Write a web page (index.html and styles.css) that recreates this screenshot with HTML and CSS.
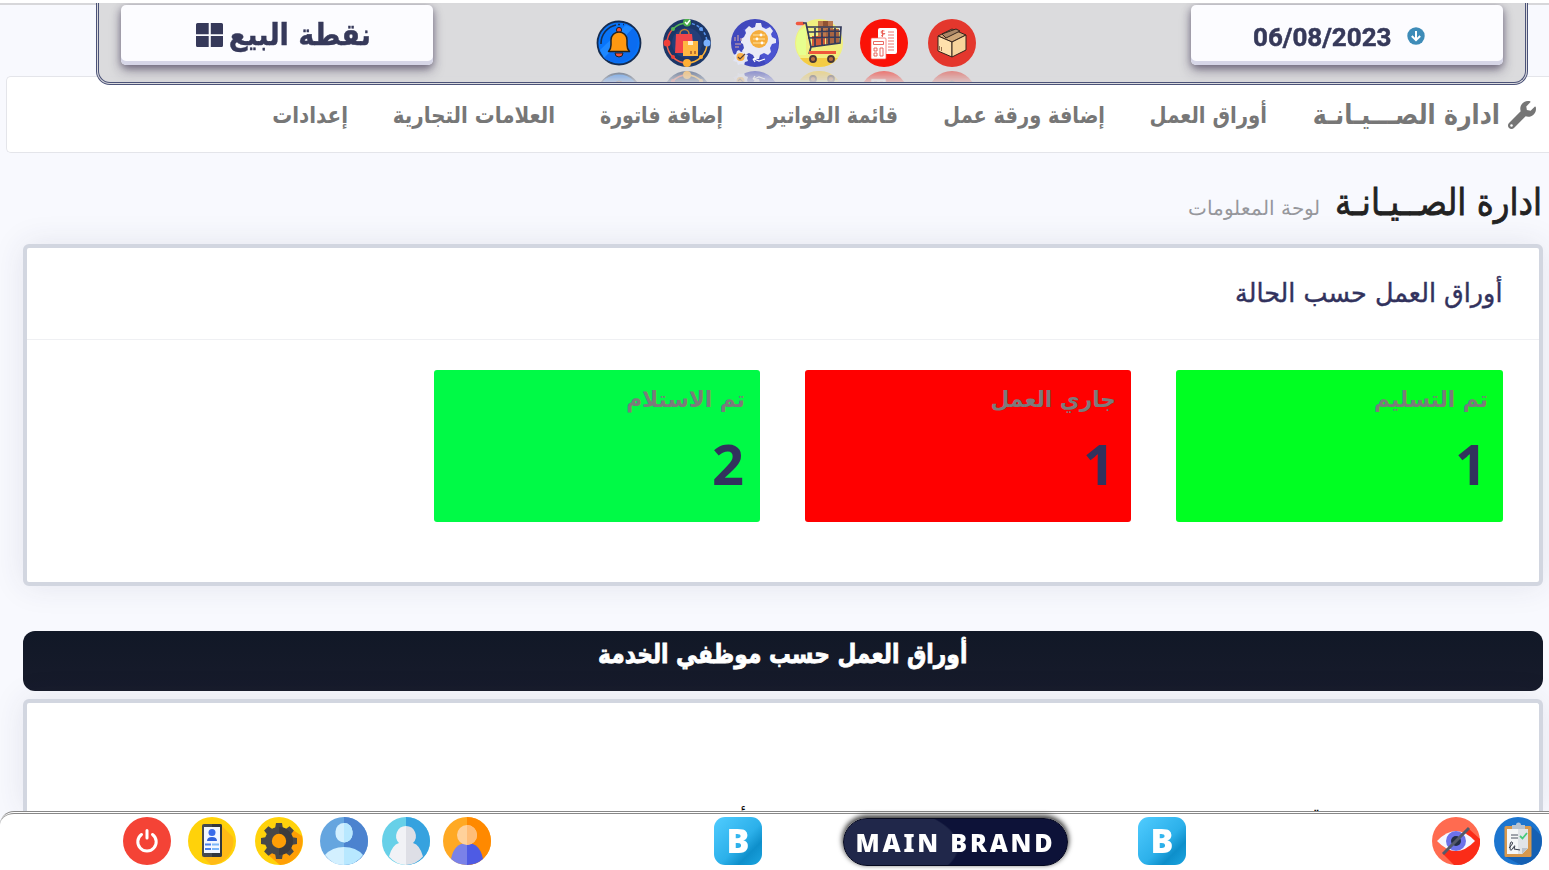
FILE: index.html
```html
<!DOCTYPE html>
<html lang="ar">
<head>
<meta charset="utf-8">
<title>ادارة الصيانة</title>
<link rel="stylesheet" href="styles.css">
</head>
<body>
<div class="topline"></div>
<header class="dock">
  <a class="key key-pos"><svg class="grid-icon" viewBox="0 0 28 24"><path d="M1.500 0H12.700V11.200H0V1.500Q0 0 1.500 0ZM14.800 0H25.500Q27 0 27 1.500V11.200H14.800ZM0 13H12.700V24H1.500Q0 24 0 22.500ZM14.800 13H27V22.500Q27 24 25.500 24H14.800Z"/></svg><span class="pos-text" dir="rtl">نقطة البيع</span></a>
  <div class="launch">
    <svg class="ico" viewBox="0 0 48 48"><circle cx="24" cy="24" r="21.500" fill="#0874f9" stroke="#152c50" stroke-width="1.800"/><path d="M9 39 38 9A21 21 0 0 1 9 39" fill="#0b6cf0"/><path d="M9 39 38 9 31 6 5 31Z" fill="#1e88ff"/><path d="M6 25A19 19 0 0 1 21 6M23 5.500H25M28 5.500H29" fill="none" stroke="#172d50" stroke-width="1.600"/><circle cx="24" cy="11" r="2.600" fill="#e84d3c" stroke="#222" stroke-width="1"/><path d="M20 34a4 4 0 0 0 8 0Z" fill="#ee5140" stroke="#222"/><path d="M13.500 32.500Q16 30 16 26V21A8 8 0 0 1 32 21V26Q32 30 34.500 32.500Z" fill="#ff9811" stroke="#222" stroke-width="1.500" stroke-linejoin="round"/></svg>
    <svg class="ico bag" viewBox="0 0 48 48"><circle cx="24" cy="24" r="24" fill="#1c3768"/><circle cx="24" cy="24" r="15" fill="#243f79"/><g fill="none" stroke-width="1.500"><path d="M4 24A20 20 0 0 1 10 10" stroke="#ed4c46"/><path d="M10 10A20 20 0 0 1 24 4" stroke="#55b756"/><path d="M24 4A20 20 0 0 1 44 24" stroke="#5794ef" stroke-dasharray="3 2"/><path d="M44 24A20 20 0 0 1 24 44" stroke="#fbb43b"/><path d="M24 44A20 20 0 0 1 4 24" stroke="#ef6550"/></g><circle cx="4" cy="24" r="3.500" fill="#f04039"/><circle cx="44" cy="24" r="3.500" fill="#7ab2ff"/><circle cx="24" cy="44" r="4" fill="#ffaf35"/><circle cx="24" cy="3.500" r="4" fill="#4cae4d"/><path d="m22 3 2 2 3-4" stroke="#fff" stroke-width="1.500" fill="none"/><g><circle cx="10" cy="10" r="2" fill="#55b756"/><circle cx="38" cy="10" r="2" fill="#65a1f5"/><circle cx="10" cy="38" r="2" fill="#f04039"/><circle cx="38" cy="38" r="2" fill="#ffaf35"/></g><path d="M17 16v-1a4.500 4.500 0 0 1 9 0v1" fill="none" stroke="#c98032" stroke-width="1.500"/><path d="M13 15H29L31 34H12Z" fill="#f2454a"/><path d="M20 22H35V37H20Z" fill="#ffb842"/><path d="M25 22h5v4h-5Z" fill="#fff0cc"/><path d="M27 32h2v3h-2zm4 0h2v3h-2z" fill="#bd722f"/></svg>
    <svg class="ico gears" viewBox="0 0 48 48"><circle cx="24" cy="24" r="24" fill="#4048bd"/><path d="M12 10 40 7A24 24 0 0 1 35 45Z" fill="#4b54d1"/><path d="M25 4h5l1 4 4 2 4-2 3 4-2 3 1 3 4 2v4l-4 1-2 4 1 4-3 3-4-2-4 2-1 4h-4l-2-4-4-2-4 2-3-4 2-3-1-4-2-1v-4l3-2 2-4-1-3 4-4 3 2 3-1Z" fill="#e9eaf6"/><circle cx="28" cy="20" r="9" fill="#f5ad3d"/><path d="M22 16H34M22 20H34M22 24H34" stroke="#ffe2a3" stroke-width="1"/><circle cx="30" cy="16" r="1.400" fill="#fff"/><circle cx="26" cy="20" r="1.400" fill="#fff"/><circle cx="31" cy="24" r="1.400" fill="#fff"/><path d="m8 31 2 2 3-1 1 3 3 1-1 3 1 3-3 1-1 3-3-1-3 1-1-3-4-1 2-3-2-3 3-1 1-3Z" fill="#e2e5f4"/><circle cx="9.500" cy="38" r="4" fill="#fbb046"/><path d="m7 38 2 2 5-5" fill="none" stroke="#5c4138" stroke-width="1.200"/><path d="M4 22v-4m3 4v-6m3 6v-3M4 25h6m-6 3h4" stroke="#a98cab" stroke-width="1.500"/><path d="m23 40 5 2 6-2m-12 0 3-1m-3 1 2 3" fill="none" stroke="#fff" stroke-width="1.300"/></svg>
    <svg class="ico cart" viewBox="0 0 48 48"><circle cx="24" cy="24" r="24" fill="#f1f080"/><path d="M5 39H43Q36 48 24 48T5 39Z" fill="#f4cc45"/><path d="M4 12 11 8V36H4Q-2 24 4 12Z" fill="#e7ff8f"/><path d="M23 2H38V18H23Z" fill="#bc794d"/><path d="M28 2h5v5h-5Z" fill="#915333"/><path d="M17 17H30V27H17Z" fill="#d25a3a"/><path d="M31 10H44V25H31Z" fill="#a86542"/><path d="M2.500 4.500H8" stroke="#f15840" stroke-width="3.500" stroke-linecap="round"/><path d="M8 4H11L16 28 14 35M11 8H46L45 24 16 28M12 13 45 12M13 19 45 18M20 9v18m7-18v17m7-17v17m6-17v15" fill="none" stroke="#343b5a" stroke-width="1.700"/><path d="M14 33.500H41" stroke="#ee593b" stroke-width="3"/><circle cx="18" cy="40" r="3" fill="#ba7140" stroke="#493936" stroke-width="1.800"/><circle cx="36" cy="40" r="3" fill="#ba7140" stroke="#493936" stroke-width="1.800"/></svg>
    <svg class="ico bill" viewBox="0 0 48 48"><circle cx="24" cy="24" r="24" fill="#fa1207"/><rect x="18" y="9" width="19" height="26" rx="2" fill="#fff"/><path d="M28 13h6m-6 3h6m-6 3h6m-6 3h6m-6 3h6m-6 3h6m-6 3h6" stroke="#e8584f" stroke-width=".8"/><path d="M24.500 12q-3.500-1-3.500 1t3 1.500-3 2.500m1.500-6v7" stroke="#e8584f" fill="none" stroke-width=".9"/><rect x="11" y="19" width="15" height="21" rx="1" fill="#fff" stroke="#f65a50" stroke-width=".7"/><path d="M13.500 22.500h10v3h-10zM14 29h3v3h-3zm0 5h3v3h-3zm6-5h3v8h-3z" stroke="#e8584f" stroke-width=".9" fill="none"/></svg>
    <svg class="ico box" viewBox="0 0 48 48"><circle cx="24" cy="24" r="24" fill="#e4372d"/><g stroke="#35241c" stroke-width="1" stroke-linejoin="round"><path d="m10 17 14-7 14 6-14 7Z" fill="#cda476"/><path d="m10 17 14 6v15L10 32Z" fill="#ffe0ac"/><path d="m24 23 14-7v15l-14 7Z" fill="#f8d49b"/><path d="m14 15 14-5 4 2-14 7Z" fill="#ab8766"/></g><path d="M11.500 27v4m2-3v4" stroke="#9a7050"/></svg>
  </div>
  <a class="key key-date"><span class="date-text">06/08/2023</span><svg class="down" viewBox="0 0 18 18"><circle cx="9" cy="9" r="8.700" fill="#3e8cb8"/><path d="M9 4v9M4.800 9 9 13.200 13.200 9" stroke="#fff" stroke-width="2" fill="none"/></svg></a>
</header>

<nav class="menu" dir="rtl">
  <a class="brand"><svg class="wrench" viewBox="0 0 512 512"><path d="M507.700 109.100c-2.200-9-13.500-12.100-20.100-5.500l-74.400 74.400-67.900-11.300-11.300-67.900 74.400-74.400c6.600-6.600 3.400-17.900-5.700-20.200-47.400-11.700-99.600.9-136.600 37.900-39.600 39.600-50.500 97.100-34 147.200L18.700 402.800c-25 25-25 65.500 0 90.500s65.500 25 90.500 0l213.200-213.200c50.100 16.700 107.500 5.700 147.400-34.200 37.100-37.100 49.700-89.300 37.900-136.800zM64 472a24 24 0 1 1 0-48 24 24 0 0 1 0 48z"/></svg><span class="brand-text">ادارة الصـــيـانـة</span></a>
  <a class="m1">أوراق العمل</a><a class="m2">إضافة ورقة عمل</a><a class="m3">قائمة الفواتير</a><a class="m4">إضافة فاتورة</a><a class="m5">العلامات التجارية</a><a class="m6">إعدادات</a>
</nav>

<main class="content" dir="rtl">
  <h1 class="title"><span class="title-text">ادارة الصــيـانـة</span><small>لوحة المعلومات</small></h1>
  <section class="card">
    <h2 class="card-head"><span>أوراق العمل حسب الحالة</span></h2>
    <div class="stats">
      <div class="stat s1"><p>تم التسليم</p><b>1</b></div>
      <div class="stat s2"><p>جاري العمل</p><b>1</b></div>
      <div class="stat s3"><p>تم الاستلام</p><b>2</b></div>
    </div>
  </section>
  <h2 class="banner"><span>أوراق العمل حسب موظفي الخدمة</span></h2>
  <section class="card staff"><span class="th-a">قسم</span><span class="th-b">أوراق</span></section>
</main>

<footer class="taskbar">
  <svg class="ico" viewBox="0 0 48 48"><circle cx="24" cy="24" r="24" fill="#f44336"/><path d="M18.500 17.500A9.200 9.200 0 1 0 29.500 17.500M24 13.500v7.500" stroke="#fff" stroke-width="3" stroke-linecap="round" fill="none"/></svg>
  <svg class="ico f2" viewBox="0 0 48 48"><circle cx="24" cy="24" r="24" fill="#ffd20a"/><path d="M33 8 45 20A24 24 0 0 1 23 48L14 39Z" fill="#ffba16"/><rect x="14" y="7" width="20" height="33" rx="2" fill="#454a50"/><path d="M24 7h8q2 0 2 2v29q0 2-2 2h-8Z" fill="#30363e"/><path d="M16 10H32V36H16Z" fill="#f2f7ff"/><circle cx="24" cy="15.500" r="3.500" fill="#386bea"/><path d="M19 24q0-4 5-4t5 4Z" fill="#3062dc"/><path d="M17 27.500h6m-6 4.500h6" stroke="#4881ec" stroke-width="2.200"/><path d="M24 27.500h7m-7 4.500h7" stroke="#7bb6f8" stroke-width="2.200"/></svg>
  <svg class="ico f3" viewBox="0 0 48 48"><circle cx="24" cy="24" r="24" fill="#ffd20b"/><path d="m38 13 9 6A24 24 0 0 1 25 48L12 37Z" fill="#ff9f06"/><g fill="#484848"><path id="tooth" d="M20 12 21 6H27L28 12Z"/><use href="#tooth" transform="rotate(45 24 24)"/><use href="#tooth" transform="rotate(90 24 24)"/><use href="#tooth" transform="rotate(135 24 24)"/><use href="#tooth" transform="rotate(180 24 24)"/><use href="#tooth" transform="rotate(225 24 24)"/><use href="#tooth" transform="rotate(270 24 24)"/><use href="#tooth" transform="rotate(315 24 24)"/><circle cx="24" cy="24" r="14"/></g><path d="M24 10a14 14 0 0 1 0 28Z" fill="#3d3b3c"/><circle cx="24" cy="24" r="7.200" fill="#ff9e05"/></svg>
  <svg class="ico f4" viewBox="0 0 48 48"><circle cx="24" cy="24" r="24" fill="#65a5df"/><path d="M24 0a24 24 0 0 1 0 48Z" fill="#4c83cf"/><rect x="15.500" y="6" width="17" height="19.500" rx="8.500" fill="#d3f0ff"/><path d="M24 6a8.500 8.500 0 0 1 8.500 8.500V17A8.500 8.500 0 0 1 24 25.500ZM24 30Q36 30 43 38 36 48 24 48Z" fill="#b8e8ff"/><path d="M24 30Q12 30 5 38 12 48 24 48Z" fill="#d3f0ff"/></svg>
  <svg class="ico f5" viewBox="0 0 48 48"><circle cx="24" cy="24" r="24" fill="#67d0e8"/><path d="M24 0a24 24 0 0 1 0 48Z" fill="#36a2df"/><path d="M24 9a10 10 0 0 0-7 17Q10 28 7 39.500A24 24 0 0 0 24 48Z" fill="#f1f2f6"/><path d="M24 9a10 10 0 0 1 7 17q7 2 10 13.500A24 24 0 0 1 24 48Z" fill="#dedfe6"/></svg>
  <svg class="ico f6" viewBox="0 0 48 48"><circle cx="24" cy="24" r="24" fill="#ffa923"/><path d="M24 0a24 24 0 0 1 0 48Z" fill="#ff8900"/><path d="M24 26Q11 26 8 42A24 24 0 0 0 24 48Z" fill="#7a82e8"/><path d="M24 26q13 0 16 16a24 24 0 0 1-16 6Z" fill="#4e5be4"/><circle cx="24" cy="18" r="10" fill="#ffd19b"/><path d="M24 8a10 10 0 0 1 0 20Z" fill="#ffbd78"/></svg>
  <span class="bsq b1"><b>B</b></span>
  <span class="pill"><b>MAIN BRAND</b></span>
  <span class="bsq b2"><b>B</b></span>
  <svg class="ico eye" viewBox="0 0 48 48"><circle cx="24" cy="24" r="24" fill="#ff6b50"/><path d="M37 12 48 22A24 24 0 0 1 22 48L11 37Z" fill="#fb2c18"/><path d="M5 24Q24 4 43 24 24 44 5 24Z" fill="#f5f7ff"/><circle cx="24" cy="24" r="10" fill="#6d72e9"/><circle cx="24" cy="24" r="5" fill="#252f43"/><path d="M11 37 37 11" stroke="#555a69" stroke-width="3"/></svg>
  <svg class="ico clip" viewBox="0 0 48 48"><circle cx="24" cy="24" r="24" fill="#1c75cf"/><path d="M37 9 47 18A24 24 0 0 1 27 48L10 39Z" fill="#1560b3"/><rect x="10.500" y="9" width="27" height="31" rx="1.500" fill="#d7984d"/><path d="M13 12H34V31L28 37H13Z" fill="#f6f7f8"/><path d="M24 12H34V31L28 37H24Z" fill="#e1e4e8"/><path d="m34 31-6 6v-6Z" fill="#bac2cb"/><path d="M18 12V8h4a2.500 2.500 0 0 1 5 0h4v4Z" fill="#b8c3d0"/><path d="M17 18h7m-7 3h7" stroke="#4b5260" stroke-width="1.200"/><path d="m26 19 2.500 2.500L33 16" fill="none" stroke="#47ca7b" stroke-width="1.800"/><path d="M15 31q5-5 3-6t-2 5 3 1 1 1l6 1" fill="none" stroke="#343947"/></svg>
</footer>
</body>
</html>
```
FILE: styles.css
```css
* { box-sizing: border-box; }
html { height: 100%; overflow: hidden; }
body { margin: 0; height: 870px; overflow: hidden; background: #f8f9fe; font-family: "DejaVu Sans", sans-serif; }
a { white-space: nowrap; }
.topline { height: 5px; background: #fff; border-bottom: 2px solid #d7d7da; }

/* floating dock at the top of the window */
.dock { position: fixed; z-index: 2; left: 96px; top: 3px; width: 1432px; height: 82px; display: flex; justify-content: space-between; padding: 2px 22px 0 22px; overflow: hidden; background: rgba(218,218,220,.96); border: 3px double #4b5278; border-top: 0; border-radius: 0 0 14px 14px; }
.key { display: flex; align-items: center; justify-content: center; width: 312px; height: 60px; padding-top: 3px; background: #fcfcff; border-radius: 5px; box-shadow: inset 0 -4px 0 #d6d6e7, 0 3px 8px rgba(45,35,66,.6), 0 8px 14px rgba(45,35,66,.18); color: #36395a; font-weight: bold; }
.key-pos { padding: 0 0 0 13px; }
.grid-icon { width: 28px; height: 24px; fill: #36395a; margin-right: 7px; }
.pos-text { font-size: 30px; line-height: 40px; width: 140px; transform: scaleX(.905); transform-origin: right; -webkit-text-stroke: .4px #36395a; }
.key-date { padding: 2px 16px 0 0; }
.date-text { font-family: Roboto, sans-serif; font-size: 26.500px; width: 139px; margin-right: 15px; transform: scaleX(.98); transform-origin: left; -webkit-text-stroke: .5px #36395a; }
.down { width: 18px; height: 18px; }
.launch { display: flex; padding-top: 14px; width: 383px; margin-right: 52px; }
.ico { display: block; flex: none; width: 48px; height: 48px; }
.launch .ico { -webkit-box-reflect: below 4px linear-gradient(transparent 68%, rgba(0,0,0,.5)); overflow: hidden; }
.bag { margin-left: 20px; }
.gears { margin-left: 20px; }
.cart { margin-left: 16px; }
.bill { margin-left: 17px; }
.box { margin-left: 20px; }

.menu { display: flex; align-items: center; height: 77px; margin: 71px 0 0 6px; padding: 0 13px 0 0; background: #fff; border: 1px solid #e4e5ea; border-right: 0; border-radius: 5px 0 0 5px; color: #777; font-size: 23px; font-weight: bold; }
.menu a { flex: none; margin-left: 45px; transform-origin: right; }
.brand { display: flex; align-items: center; width: 223px; font-size: 28px; }
.brand-text { width: 187px; transform: scaleX(.847); transform-origin: right; }
.wrench { width: 28px; height: 28px; margin-left: 8px; fill: #757575; }
.m1 { width: 117px; transform: translateX(-1px) scaleX(.855); }
.m2 { width: 162px; transform: translateX(-1px) scaleX(.842); }
.m3 { width: 130px; transform: translateX(-1px) scaleX(.829); }
.m4 { width: 123px; transform: translateX(-1px) scaleX(.824); }
.m5 { width: 162px; transform: translateX(-1px) scaleX(.863); }
.m6 { width: 76px; transform: translateX(-1px) scaleX(.866); }

.content { padding: 0 6px 0 23px; }
.title { display: flex; align-items: baseline; height: 91px; margin: 0; padding-top: 28px; color: #222; font-size: 37px; line-height: 44px; font-weight: normal; white-space: nowrap; }
.title-text { width: 206px; margin-left: 17px; transform: translateX(-1px) scaleX(.879); transform-origin: right; -webkit-text-stroke: .8px #222; }
.title small { color: #96979c; font-size: 20px; font-weight: 200; }
.card { height: 342px; background: #fff; border: 4px solid #d2d6e0; border-radius: 6px; box-shadow: 0 0 32px rgba(50,50,93,.1); }
.card-head { height: 92px; margin: 0; padding: 25px 37px 0; border-bottom: 1px solid #eff0f3; color: #32325d; font-size: 26px; line-height: 40px; font-weight: normal; white-space: nowrap; }
.card-head span { display: inline-block; transform: scaleX(.978); transform-origin: right; -webkit-text-stroke: .4px #32325d; }
.stats { display: flex; gap: 45px; padding: 30px 36px; }
.stat { width: 326px; height: 152px; border-radius: 3px; padding: 12px 15px; color: #32325d; }
.stat p { margin: 0; height: 36px; line-height: 35px; color: #7b7b7b; font-size: 22.500px; font-weight: bold; white-space: nowrap; transform: scaleX(.964); transform-origin: right; }
.stat b { display: block; font-family: "Noto Sans", sans-serif; font-size: 56px; line-height: 70px; margin-top: 10px; transform: translateX(-1px); }
.s1 { background: #00ff22; width: 327px; }
.s2 { background: #f00; }
.s3 { background: #00fa46; }
.banner { display: flex; justify-content: center; height: 60px; margin: 45px 0 8px; border-radius: 12px; background: linear-gradient(#111827, #171b2b); color: #fff; font-size: 26px; line-height: 46px; white-space: nowrap; }
.banner span { transform: scaleX(.837); -webkit-text-stroke: .8px #fff; }
.staff { display: flex; height: 112px; padding-top: 101px; overflow: hidden; border-bottom: 0; border-radius: 6px 6px 0 0; font-size: 20px; line-height: 24px; }
.th-a { width: 569px; padding-right: 218px; flex: none; }
.th-b { margin: 3px 224px 0 0; }

/* task bar pinned to the bottom edge */
.taskbar { position: fixed; z-index: 3; left: 0; bottom: 0; width: 1549px; height: 59px; display: flex; padding: 3px 0 0 123px; background: #fff; border-top: 3px double #888; border-radius: 14px 0 0 0; }
.f2 { margin-left: 17px; }
.f3 { margin-left: 19px; }
.f4 { margin-left: 17px; }
.f5 { margin-left: 14px; }
.f6 { margin-left: 13px; }
.bsq { width: 48px; height: 48px; border-radius: 11px; background: linear-gradient(135deg, #50ccff 0, #2cb0ea 55%, #0e8fcb 75%, #1ba5e0 100%); color: #fff; font: bold 34px/47px "Noto Sans", sans-serif; text-align: center; flex: none; }
.b1 { margin-left: 223px; }
.pill { width: 225px; height: 48px; margin: 1px 0 0 81px; border-radius: 24px; background: radial-gradient(ellipse 115px 46px at 0 60%, #20274a 98%, #0d1238 100%); border: 1px solid #05081e; box-shadow: 0 -2px 5px 1px rgba(0,0,0,.75); color: #fff; font: bold 25px/47px "Noto Sans", sans-serif; letter-spacing: 2.800px; text-align: center; white-space: nowrap; flex: none; }
.b2 { margin-left: 70px; }
.eye { margin-left: 246px; }
.clip { margin-left: 14px; }
```
